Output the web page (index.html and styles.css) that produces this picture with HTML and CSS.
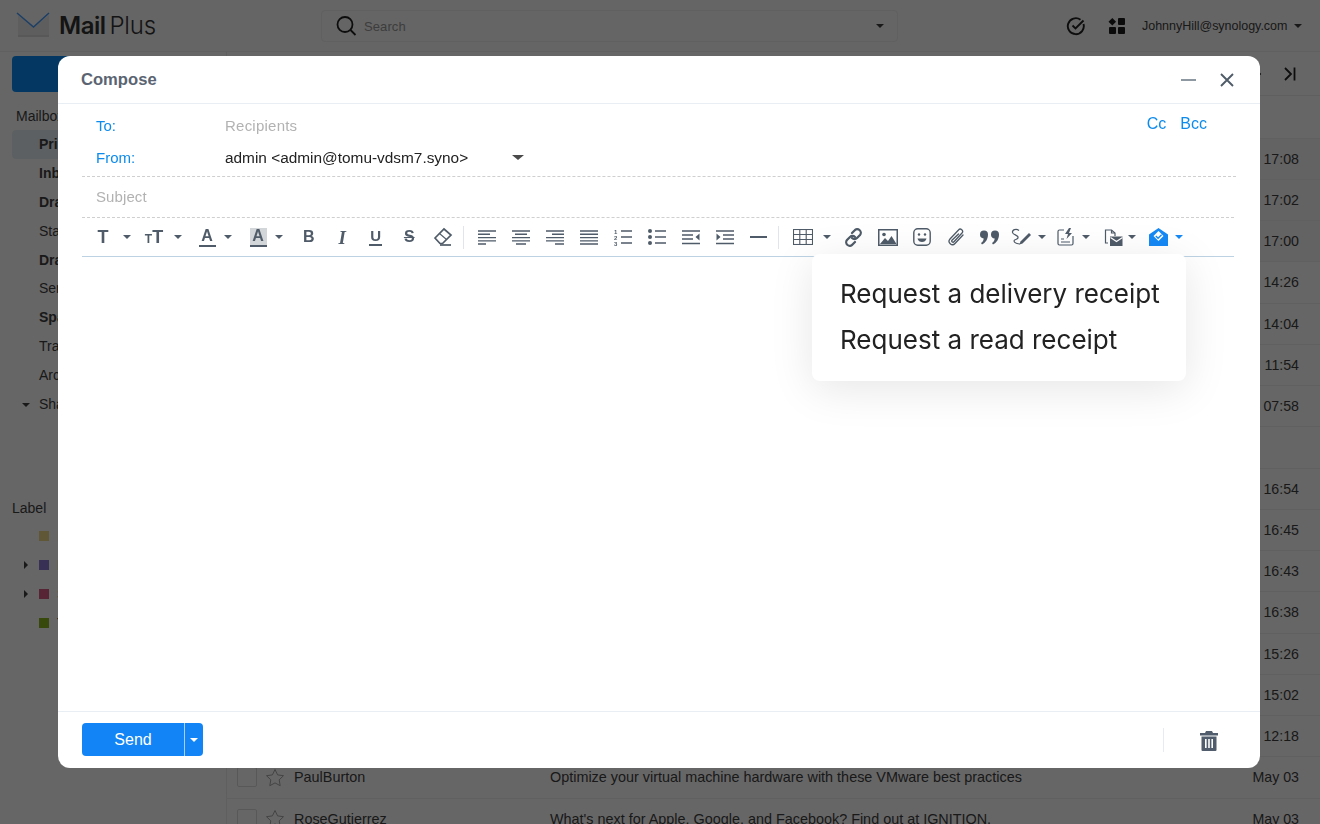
FILE: index.html
```html
<!DOCTYPE html>
<html lang="en">
<head>
<meta charset="utf-8">
<title>MailPlus Compose</title>
<link rel="stylesheet" href="styles.css">
</head>
<body>
<div class="app">
  <header class="topbar">
    <div class="logo">
      <svg class="logo-mark" width="34" height="26" viewBox="0 0 34 26"><path d="M2 3l15.500 12L33 3v22H2z" fill="#ececec"/><path d="M2 23h31v2H2z" fill="#dcdcdc"/><path d="M1 1l16.500 14L33 1" fill="none" stroke="#469dff" stroke-width="1.500"/></svg>
      <span class="logo-mail">Mail</span><span class="logo-plus">Plus</span>
    </div>
    <div class="search">
      <svg width="24" height="24" viewBox="0 0 24 24" fill="none" stroke="#222" stroke-width="1.800"><circle cx="11" cy="10.500" r="7.500"/><path d="M16.500 16l5 5"/></svg>
      <span class="search-text">Search</span>
      <i class="caret caret-search"></i>
    </div>
    <div class="top-right">
      <svg width="20" height="20" viewBox="0 0 20 20" fill="none" stroke="#222" stroke-width="1.900"><path d="M17.500 8a8 8 0 1 1-3-4.300"/><path d="M6.500 9.500l3 3 8-8"/></svg>
      <svg class="apps" width="18" height="16" viewBox="0 0 18 16" fill="#1c1c1c"><path d="M4.300 0l3.800 3.700-3.800 3.700L.5 3.700z"/><rect x="10" y="0" width="7" height="7" rx="1"/><rect x="1" y="9" width="7" height="7" rx="1"/><rect x="10" y="9" width="7" height="7" rx="1"/></svg>
      <span class="user">JohnnyHill@synology.com</span>
      <i class="caret caret-user"></i>
    </div>
  </header>
  <div class="main">
    <aside class="sidebar">
      <div class="new-btn"></div>
      <div class="side-title">Mailbox</div>
      <div class="side-item bold selected">Primary</div>
      <div class="side-item bold">Inbox</div>
      <div class="side-item bold">Drafts</div>
      <div class="side-item">Starred</div>
      <div class="side-item bold">Drafts</div>
      <div class="side-item">Sent</div>
      <div class="side-item bold">Spam</div>
      <div class="side-item">Trash</div>
      <div class="side-item">Archive</div>
      <div class="side-item"><i class="caret caret-tree"></i>Shared</div>
      <div class="label-title">Label</div>
      <div class="label-item"><b class="swatch swatch-yellow"></b>Ideas</div>
      <div class="label-item"><i class="arrow"></i><b class="swatch swatch-purple"></b>Personal</div>
      <div class="label-item"><i class="arrow"></i><b class="swatch swatch-red"></b>Sales</div>
      <div class="label-item"><b class="swatch swatch-green"></b>Team</div>
    </aside>
    <section class="list">
      <div class="list-tools">
        <svg width="40" height="16" viewBox="0 0 40 16" fill="none" stroke="#222" stroke-width="1.800"><path d="M0 5l3 3-3 3"/><path d="M28 2l6 6-6 6M37.500 1.500v13"/></svg>
      </div>
      <div class="list-spacer"></div>
      <div class="row unread"><span class="time">17:08</span></div>
      <div class="row unread"><span class="time">17:02</span></div>
      <div class="row unread"><span class="time">17:00</span></div>
      <div class="row"><span class="time">14:26</span></div>
      <div class="row"><span class="time">14:04</span></div>
      <div class="row"><span class="time">11:54</span></div>
      <div class="row"><span class="time">07:58</span></div>
      <div class="row"></div>
      <div class="row"><span class="time">16:54</span></div>
      <div class="row"><span class="time">16:45</span></div>
      <div class="row"><span class="time">16:43</span></div>
      <div class="row"><span class="time">16:38</span></div>
      <div class="row"><span class="time">15:26</span></div>
      <div class="row"><span class="time">15:02</span></div>
      <div class="row"><span class="time">12:18</span></div>
      <div class="row">
        <i class="check"></i>
        <svg class="star" width="20" height="19" viewBox="0 0 20 19" fill="none" stroke="#a8a8a8"><path d="M10 1.500l2.600 5.400 5.900.8-4.300 4.100 1 5.900-5.200-2.800-5.200 2.800 1-5.900L1.500 7.700l5.900-.8z"/></svg>
        <span class="sender">PaulBurton</span>
        <span class="subject-text">Optimize your virtual machine hardware with these VMware best practices</span>
        <span class="time">May 03</span>
      </div>
      <div class="row">
        <i class="check"></i>
        <svg class="star" width="20" height="19" viewBox="0 0 20 19" fill="none" stroke="#a8a8a8"><path d="M10 1.500l2.600 5.400 5.900.8-4.300 4.100 1 5.900-5.200-2.800-5.200 2.800 1-5.900L1.500 7.700l5.900-.8z"/></svg>
        <span class="sender">RoseGutierrez</span>
        <span class="subject-text">What's next for Apple, Google, and Facebook? Find out at IGNITION.</span>
        <span class="time">May 03</span>
      </div>
    </section>
  </div>
</div>

<div class="overlay">
  <div class="modal">
    <div class="modal-head">
      <span class="modal-title">Compose</span>
      <span class="minimize"></span>
      <svg class="close" width="14" height="14" viewBox="0 0 14 14" stroke="#4f5b68" stroke-width="1.900"><path d="M1 1l12 12M13 1L1 13"/></svg>
    </div>
    <div class="fields">
      <div class="field field-to">
        <span class="field-label">To:</span>
        <span class="placeholder">Recipients</span>
        <span class="cc">Cc</span><span class="bcc">Bcc</span>
      </div>
      <div class="field field-from">
        <span class="field-label">From:</span>
        <span class="from-value">admin &lt;admin@tomu-vdsm7.syno&gt;</span>
        <i class="caret caret-from"></i>
      </div>
      <div class="field field-subject">
        <span class="placeholder subject-ph">Subject</span>
      </div>
    </div>
    <div class="toolbar">
      <div class="group g51"><span class="ico"><span class="g g-t">T</span></span><i class="caret tcaret"></i></div>
      <div class="group g53"><span class="ico"><span class="g g-small">T</span><span class="g g-t">T</span></span><i class="caret tcaret"></i></div>
      <div class="group g51"><span class="ico"><span class="g g-a">A</span></span><i class="caret tcaret near"></i></div>
      <div class="group g51"><span class="ico"><span class="g g-a g-hl">A</span></span><i class="caret tcaret near"></i></div>

      <span class="tool"><span class="g g-b">B</span></span>
      <span class="tool"><span class="g g-i">I</span></span>
      <span class="tool"><span class="g g-u">U</span></span>
      <span class="tool"><span class="g g-s">S</span></span>
      <span class="tool">
        <svg width="20" height="20" viewBox="0 0 20 20" fill="none" stroke="#4f5b68" stroke-width="1.700"><path d="M2 11l9-9 7 6-8.500 8.500H7z"/><path d="M7 18h11"/><path d="M6.500 6.500l7 6" stroke-width="1.100"/></svg>
      </span>
      <i class="sep sep-a"></i>
      <span class="tool t34"><svg width="18" height="16" viewBox="0 0 18 16" stroke="#4f5b68" stroke-width="1.400"><path d="M0 2h18M0 5.300h12M0 8.600h18M0 11.900h18M0 15h8"/></svg></span>
      <span class="tool t34"><svg width="18" height="16" viewBox="0 0 18 16" stroke="#4f5b68" stroke-width="1.400"><path d="M0 2h18M3 5.300h12M0 8.600h18M0 11.900h18M4 15h10"/></svg></span>
      <span class="tool t34"><svg width="18" height="16" viewBox="0 0 18 16" stroke="#4f5b68" stroke-width="1.400"><path d="M0 2h18M6 5.300h12M0 8.600h18M0 11.900h18M9 15h9"/></svg></span>
      <span class="tool t34"><svg width="18" height="16" viewBox="0 0 18 16" stroke="#4f5b68" stroke-width="1.400"><path d="M0 2h18M0 5.300h18M0 8.600h18M0 11.900h18M0 15h18"/></svg></span>
      <span class="tool t34"><svg width="18" height="18" viewBox="0 0 18 18" stroke="#4f5b68" stroke-width="1.400" fill="#4f5b68"><text x="0" y="5.500" class="svg-num" stroke="none">1</text><text x="0" y="11.500" class="svg-num" stroke="none">2</text><text x="0" y="17.500" class="svg-num" stroke="none">3</text><path d="M7 3h11M7 9h11M7 15h11"/></svg></span>
      <span class="tool t34"><svg width="18" height="16" viewBox="0 0 18 16" stroke="#4f5b68" stroke-width="1.400" fill="#4f5b68"><circle cx="2" cy="2" r="2" stroke="none"/><circle cx="2" cy="8" r="2" stroke="none"/><circle cx="2" cy="14" r="2" stroke="none"/><path d="M7 2h11M7 8h11M7 14h11"/></svg></span>
      <span class="tool t34"><svg width="18" height="15" viewBox="0 0 18 15" stroke="#4f5b68" stroke-width="1.400" fill="#4f5b68"><path d="M0 1h18M0 5h11M0 9h11M0 13.500h18"/><path d="M17.500 3.500v7l-4-3.500z" stroke="none"/></svg></span>
      <span class="tool t34"><svg width="18" height="15" viewBox="0 0 18 15" stroke="#4f5b68" stroke-width="1.400" fill="#4f5b68"><path d="M0 1h18M7 5h11M7 9h11M0 13.500h18"/><path d="M.5 3.500v7l4-3.500z" stroke="none"/></svg></span>
      <span class="tool t34"><span class="hr-ico"></span></span>
      <i class="sep sep-b"></i>
      <div class="group g51"><span class="ico"><svg width="20" height="16" viewBox="0 0 20 16" fill="none" stroke="#4f5b68" stroke-width="1.100"><rect x=".5" y=".5" width="19" height="15"/><path d="M.5 5.500h19M.5 10.500h19M6.800.5v15M13.200.5v15"/></svg></span><i class="caret tcaret"></i></div>
      <span class="tool t34"><svg width="19" height="19" viewBox="0 0 19 19" fill="none" stroke="#4f5b68" stroke-width="2.200" stroke-linecap="round"><path d="M8 5l2.500-2.500a3.500 3.500 0 0 1 5.500 4.500l-3 3a3.500 3.500 0 0 1-5 0"/><path d="M11 14l-2.500 2.500a3.500 3.500 0 0 1-5.500-4.500l3-3a3.500 3.500 0 0 1 5 0"/></svg></span>
      <span class="tool t34"><svg width="20" height="17" viewBox="0 0 20 17" fill="#4f5b68"><path fill-rule="evenodd" d="M0 0h20v17H0zM1.500 1.500v14h17v-14z"/><circle cx="6" cy="5.500" r="1.800"/><path d="M2 15l5-6 3 3 3.500-5 5 8z"/></svg></span>
      <span class="tool t34"><svg width="18" height="18" viewBox="0 0 18 18" fill="none" stroke="#4f5b68" stroke-width="1.400"><rect x=".8" y=".8" width="16.400" height="16.400" rx="4"/><circle cx="6" cy="6.500" r="1.200" fill="#4f5b68" stroke="none"/><circle cx="12" cy="6.500" r="1.200" fill="#4f5b68" stroke="none"/><path d="M4.500 10.500h9c-.5 2.500-2.500 3.500-4.500 3.500s-4-1-4.500-3.500z" fill="#4f5b68" stroke="none"/></svg></span>
      <span class="tool t34"><svg width="18" height="18" viewBox="0 0 18 18" fill="none" stroke="#4f5b68" stroke-width="1.300" stroke-linecap="round"><path d="M16 7l-8 8.500a3.200 3.200 0 0 1-5-4.500l8.500-9a2.300 2.300 0 0 1 3.500 3l-8 8.700a1 1 0 0 1-2-1.500L11.500 6"/></svg></span>
      <span class="tool t34"><svg width="19" height="15" viewBox="0 0 19 15" fill="#4f5b68"><path d="M0 4.500a4 4 0 1 1 8 0c0 4.500-2.500 8.500-6 10l-1-1.500c1.500-1 2.500-2.500 2.700-4.500A4 4 0 0 1 0 4.500zM11 4.500a4 4 0 1 1 8 0c0 4.500-2.500 8.500-6 10l-1-1.500c1.500-1 2.500-2.500 2.700-4.500A4 4 0 0 1 11 4.500z"/></svg></span>
      <div class="group g44"><span class="ico wide"><svg width="21" height="18" viewBox="0 0 21 18" fill="none" stroke="#4f5b68" stroke-width="1.200"><path d="M8 2.500C5 0 1 2 1.500 4.500S8 7 7 10c-.7 2-4 1-4 3s4 3 6 3"/><path d="M9.500 13.500L18 5l2 2-8.500 8.500-3 1z" fill="#4f5b68" stroke="none"/></svg></span><i class="caret tcaret w1"></i></div>
      <div class="group g48"><span class="ico wide"><svg width="17" height="18" viewBox="0 0 17 18" fill="none" stroke="#4f5b68" stroke-width="1.200"><path d="M7 2H2.500A1.500 1.500 0 0 0 1 3.500v12A1.500 1.500 0 0 0 2.500 17h12a1.500 1.500 0 0 0 1.500-1.500V8"/><path d="M4 14h9M4 11h3"/><path d="M12 0L8 6h3l-1.500 5L15 5h-3l2-5z" fill="#4f5b68" stroke="none"/></svg></span><i class="caret tcaret w1"></i></div>
      <div class="group g45"><span class="ico wide"><svg width="19" height="17" viewBox="0 0 19 17" fill="none" stroke="#4f5b68" stroke-width="1.200"><path d="M4 14H1.500V1h6L11 4v3"/><path d="M7.500 1v3H11"/><path d="M6 7.500h12.500V17H6z" fill="#4f5b68" stroke="none"/><path d="M6.500 8.500l6 4 6-4" stroke="#fff"/></svg></span><i class="caret tcaret w0"></i></div>
      <div class="group"><span class="ico wide"><svg width="19" height="18" viewBox="0 0 19 18" fill="#1689f5"><path d="M9.500 0L19 6.500V18H0V6.500z"/><path d="M4.500 8L9.500 3l5 5-5 5z" fill="#fff"/><path d="M6.800 8l2.300 2.300 3.500-3.500" fill="none" stroke="#1689f5" stroke-width="1.300"/></svg></span><i class="caret tcaret w1 caret-blue"></i></div>
    </div>
    <div class="editor"></div>
    <div class="modal-foot">
      <div class="send"><span class="send-main">Send</span><span class="send-more"><i class="caret caret-white"></i></span></div>
      <i class="foot-sep"></i>
      <svg class="trash" width="18" height="20" viewBox="0 0 18 20" fill="#515d6c"><path d="M6 0h6l1 2h5v2.500H0V2h5z"/><path fill-rule="evenodd" d="M1.500 5.500h15V19a1 1 0 0 1-1 1h-13a1 1 0 0 1-1-1zM5 8v9h1.600V8zM8.200 8v9h1.600V8zM11.400 8v9H13V8z"/></svg>
    </div>
    <div class="menu">
      <div class="menu-item">Request a delivery receipt</div>
      <div class="menu-item">Request a read receipt</div>
    </div>
  </div>
</div>
</body>
</html>
```
FILE: styles.css
```css
* { box-sizing: border-box; }
html, body { margin: 0; height: 824px; overflow: hidden; }
body { font-family: "Liberation Sans", Arial, sans-serif; color: #3f3f3f; background: #fff; font-size: 14px; }
i, b { display: block; font-style: normal; }

.app { display: flex; flex-direction: column; height: 824px; }
.topbar { height: 52px; flex: none; display: flex; align-items: center; background: #fcfcfc; border-bottom: 1px solid #f0f0f0; }
.logo { width: 321px; flex: none; display: flex; align-items: center; padding-left: 16px; }
.logo-mark { margin-right: 9px; margin-top: -2px; }
.logo-mail { font: 600 24px Inter, sans-serif; letter-spacing: -.5px; color: #333; margin-right: 4px; }
.logo-plus { font: 300 24px Inter, sans-serif; letter-spacing: -.2px; color: #333; }
.search { width: 577px; height: 32px; flex: none; display: flex; align-items: center; padding-left: 12px; border: 1px solid #efefef; border-radius: 4px; }
.search-text { margin-left: 6px; margin-top: 1px; font-size: 13px; color: #999; letter-spacing: .1px; }
.caret { display: block; width: 0; height: 0; flex: none; border-style: solid; border-width: 4px 4px 0; border-color: #3f3f3f transparent transparent; }
.caret-search { margin-left: auto; margin-right: 13px; }
.top-right { flex: 1; display: flex; align-items: center; padding-left: 168px; }
.apps { margin-left: 22px; margin-right: 16px; }
.user { font-size: 12.500px; letter-spacing: -.02px; white-space: nowrap; }
.caret-user { margin-left: 7px; }

.main { flex: 1; display: flex; min-height: 0; }
.sidebar { width: 227px; flex: none; padding: 4px 0 0 12px; border-right: 1px solid #eee; }
.new-btn { width: 190px; height: 36px; background: #0a8cf5; border-radius: 4px; margin-bottom: 14px; }
.side-title { height: 21px; line-height: 21px; padding-left: 4px; margin-bottom: 3px; white-space: nowrap; }
.side-item { height: 28.900px; line-height: 28.900px; padding-left: 27px; position: relative; white-space: nowrap; }
.bold { font-weight: 700; }
.selected { background: #e9eff5; border-radius: 4px; }
.caret-tree { position: absolute; left: 10px; top: 13px; }
.label-title { margin-top: 75px; height: 28px; line-height: 29px; }
.label-item { height: 28.900px; display: flex; align-items: center; padding-left: 27px; position: relative; white-space: nowrap; }
.arrow { position: absolute; left: 12px; top: 10px; border-style: solid; border-width: 4px 0 4px 4px; border-color: transparent transparent transparent #3f3f3f; }
.swatch { width: 10px; height: 10px; margin-right: 8px; flex: none; }
.swatch-yellow { background: #f1d98a; }
.swatch-purple { background: #8e78d8; }
.swatch-red { background: #d85a86; }
.swatch-green { background: #8ab81f; }

.list { flex: 1; min-width: 0; }
.list-tools { height: 44px; display: flex; justify-content: flex-end; align-items: center; padding-right: 23px; border-bottom: 1px solid #eee; }
.list-spacer { height: 41.500px; }
.row { height: 41.250px; display: flex; align-items: center; padding: 0 21px 0 10px; border-top: 1px solid #f1f1f1; white-space: nowrap; }
.unread { background: #f7f7f7; }
.check { width: 20px; height: 20px; flex: none; border: 1px solid #ddd; border-radius: 2px; }
.star { flex: none; margin-left: 8px; }
.sender { width: 265px; padding-left: 9px; flex: none; font-size: 14.400px; }
.subject-text { flex: 1; min-width: 0; font-size: 14.400px; }
.time { margin-left: auto; font-size: 14.200px; }

.overlay { position: fixed; inset: 0; background: rgba(0, 0, 0, .6); }
.modal { position: absolute; left: 58px; top: 56px; width: 1202px; height: 712px; background: #fff; border-radius: 12px; display: flex; flex-direction: column; }
.modal-head { height: 48px; flex: none; display: flex; align-items: center; padding: 0 26px 0 23px; border-bottom: 1px solid #e8eef3; }
.modal-title { font-size: 16.600px; font-weight: 700; color: #5a6472; }
.minimize { width: 15px; height: 2px; background: #8e98a3; margin-left: auto; margin-right: 24px; }

.fields { flex: none; padding: 0 24px; }
.field { display: flex; align-items: center; font-size: 15px; }
.field-to { height: 38px; padding: 5px 0 0 14px; }
.field-from { height: 35px; padding: 0 0 3px 14px; border-bottom: 1px dashed #cfcfcf; }
.field-subject { height: 41px; padding: 0 0 2px 14px; border-bottom: 1px dashed #cfcfcf; margin-right: 2px; }
.field-label { width: 129px; flex: none; color: #0d8bec; font-size: 15px; }
.placeholder { color: #b2b2b2; font-size: 15px; letter-spacing: .23px; }
.subject-ph { letter-spacing: .1px; }
.cc, .bcc { color: #0d8bec; margin-top: -4px; font-size: 16px; white-space: nowrap; }
.cc { margin-left: auto; margin-right: 14px; }
.bcc { margin-right: 29px; }
.from-value { color: #222; font-size: 15.400px; white-space: nowrap; }
.caret-from { margin-left: 44px; border-width: 5px 6px 0; border-top-color: #4a4a4a; }

.toolbar { flex: none; height: 39px; margin: 0 26px 0 24px; padding-left: 4px; display: flex; align-items: center; border-bottom: 1px solid #bdd3e4; }
.group { display: flex; align-items: center; flex: none; }
.g51 { width: 51px; }
.g53 { width: 53px; }
.g44 { width: 44px; }
.g45 { width: 45px; }
.g48 { width: 48px; }
.ico { width: 34px; height: 24px; flex: none; display: flex; align-items: center; justify-content: center; }
.ico.wide { width: 30px; }
.tcaret { border-top-color: #4f5b68; margin-left: 3px; }
.near { margin-left: 0; }
.w1 { margin-left: 1px; }
.w0 { margin-left: -1px; }
.caret-blue { border-top-color: #1689f5; }
.tool { width: 33.500px; height: 24px; flex: none; display: flex; align-items: center; justify-content: center; }
.t34 { width: 34px; }
.sep { width: 1px; height: 23px; flex: none; background: #dfe5ea; }
.sep-a { margin: 0 6px 0 3px; }
.sep-b { margin: 0 7px 0 2px; }
.g { color: #4f5b68; font-family: "Liberation Sans", sans-serif; font-weight: 700; line-height: 1; }
.g-t { font-size: 18px; }
.g-small { font-size: 12px; margin-top: 4px; }
.g-a { font-size: 16px; padding: 0 2px 1px; border-bottom: 2px solid #4f5b68; width: 17px; text-align: center; }
.g-hl { background: #d3d6d9; }
.g-b { font-size: 16px; }
.g-i { font-family: "Liberation Serif", serif; font-style: italic; font-size: 19px; }
.g-u { font-size: 15px; border-bottom: 2px solid #4f5b68; padding: 0 1px 1px; }
.g-s { font-size: 16px; text-decoration: line-through; font-weight: 700; }
.hr-ico { display: block; width: 17px; height: 2px; background: #4f5b68; }
.svg-num { font: 700 6px "Liberation Sans", sans-serif; }

.editor { flex: 1; min-height: 0; }
.modal-foot { height: 57px; flex: none; display: flex; align-items: center; padding: 0 42px 1px 24px; border-top: 1px solid #e8eef3; }
.send { display: flex; width: 121px; height: 33px; background: #1284f5; border-radius: 4px; color: #fff; }
.send-main { width: 103px; display: flex; align-items: center; justify-content: center; font-size: 16px; border-right: 1px solid #a7cff8; }
.send-more { flex: 1; display: flex; align-items: center; justify-content: center; }
.caret-white { border-top-color: #fff; }
.foot-sep { width: 1px; height: 24px; margin-left: auto; margin-right: 36px; background: #e6ebef; }
.trash { margin-top: 3px; }

.menu { position: absolute; left: 754px; top: 198px; width: 374px; height: 127px; padding: 16.500px 0 0 28px; background: #fff; border-radius: 8px; box-shadow: 0 8px 44px rgba(0, 0, 0, .1); }
.menu-item { height: 46px; font: 400 26px/46px Inter, sans-serif; color: #222; white-space: nowrap; }
```
